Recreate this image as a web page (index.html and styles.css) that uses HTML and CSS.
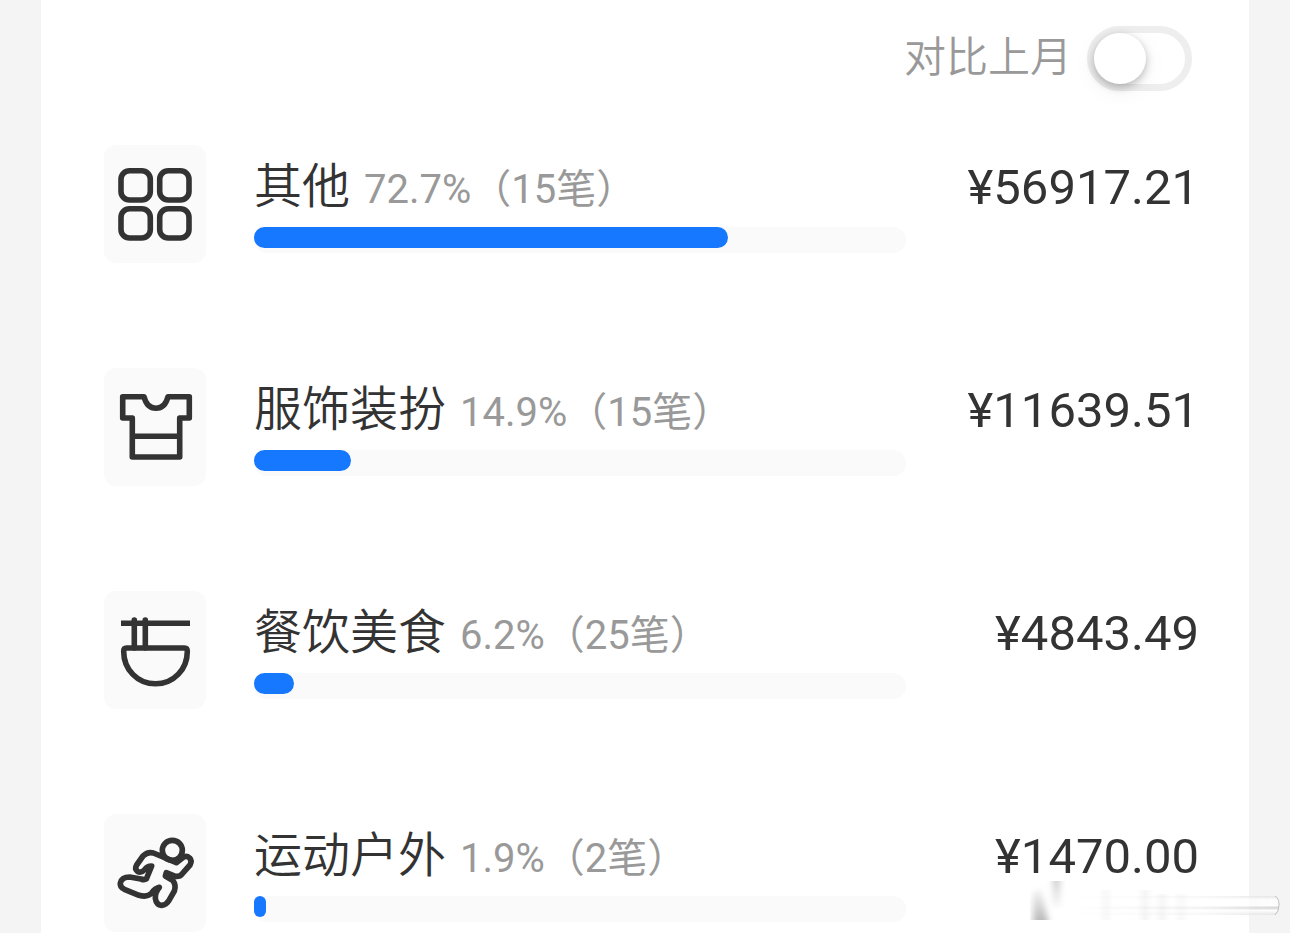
FILE: index.html
```html
<!DOCTYPE html>
<html lang="zh-CN">
<head>
    <meta charset="UTF-8">
    <meta name="viewport" content="width=device-width, initial-scale=1.0">
    <title>支出分类</title>
    <link rel="stylesheet" href="styles.css">
</head>
<body>
    <main class="card">
        <div class="compare">
            <label for="compare-switch">对比上月</label>
            <input id="compare-switch" class="switch" type="checkbox">
        </div>

        <ul class="list">
            <li class="item">
                <svg class="icon" viewBox="0 0 102 118" aria-hidden="true">
                    <rect x="17" y="25.7" width="29.3" height="29.3" rx="8.5"/>
                    <rect x="55.7" y="25.7" width="29.3" height="29.3" rx="8.5"/>
                    <rect x="17" y="63.7" width="29.3" height="29.3" rx="8.5"/>
                    <rect x="55.7" y="63.7" width="29.3" height="29.3" rx="8.5"/>
                </svg>
                <div class="info">
                    <div class="title">
                        <span class="name">其他</span>
                        <span class="detail">72.7%（15笔）</span>
                    </div>
                    <div class="track"><div class="fill" style="width: 72.7%"></div></div>
                </div>
                <div class="amount">¥56917.21</div>
            </li>

            <li class="item">
                <svg class="icon" viewBox="0 0 102 118" aria-hidden="true">
                    <path d="M40 28.7H18.7V50H28.3V89H75.7V50H85.3V28.7H64C62 37 57.5 40.3 52 40.3S42 37 40 28.7ZM28.3 68.3H75.7"/>
                </svg>
                <div class="info">
                    <div class="title">
                        <span class="name">服饰装扮</span>
                        <span class="detail">14.9%（15笔）</span>
                    </div>
                    <div class="track"><div class="fill" style="width: 14.9%"></div></div>
                </div>
                <div class="amount">¥11639.51</div>
            </li>

            <li class="item">
                <svg class="icon" viewBox="0 0 102 118" aria-hidden="true">
                    <path d="M17 32.2H86" stroke-linecap="butt"/>
                    <path d="M30.3 29V57M41.3 29V57" stroke-linecap="round"/>
                    <path d="M22.5 57H80.5Q83.3 57 83.3 60.4C83.3 78.4 69.5 92.8 51.5 92.8S19.7 78.4 19.7 60.4Q19.7 57 22.5 57Z"/>
                </svg>
                <div class="info">
                    <div class="title">
                        <span class="name">餐饮美食</span>
                        <span class="detail">6.2%（25笔）</span>
                    </div>
                    <div class="track"><div class="fill" style="width: 6.2%"></div></div>
                </div>
                <div class="amount">¥4843.49</div>
            </li>

            <li class="item">
                <svg class="icon" viewBox="27 17 306 354" aria-hidden="true">
                    <g stroke-width="17">
                        <circle cx="232" cy="126" r="30"/>
                        <path d="M202 145L175 134Q158 129 144 143L125 170Q118 182 127 189Q138 196 149 184Q156 173 170 173L154 212Q148 216 138 212L104 206Q80 206 76 224Q74 236 88 243L132 261Q158 268 170 254Q180 240 193 237Q180 252 181 270Q184 290 200 291Q214 290 222 276L238 248Q244 230 234 217L211 203L214 193L241 204Q254 206 262 196L285 170Q292 158 284 149Q274 140 263 148L244 163Z"/>
                    </g>
                </svg>
                <div class="info">
                    <div class="title">
                        <span class="name">运动户外</span>
                        <span class="detail">1.9%（2笔）</span>
                    </div>
                    <div class="track"><div class="fill" style="width: 1.9%"></div></div>
                </div>
                <div class="amount">¥1470.00</div>
            </li>
        </ul>
    </main>

    <svg class="smudge" viewBox="0 0 260 46" aria-hidden="true">
        <defs>
            <linearGradient id="streak" x1="0" y1="0" x2="0" y2="1">
                <stop offset="0" stop-color="#e2e2e2"/>
                <stop offset="0.2" stop-color="#fff"/>
                <stop offset="0.5" stop-color="#fff"/>
                <stop offset="0.62" stop-color="#d0d0d0"/>
                <stop offset="0.76" stop-color="#fff"/>
                <stop offset="1" stop-color="#e2e2e2"/>
            </linearGradient>
            <linearGradient id="fade">
                <stop offset="0" stop-color="#fff" stop-opacity="0"/>
                <stop offset="0.6" stop-color="#fff" stop-opacity="0.3"/>
                <stop offset="1" stop-color="#fff"/>
            </linearGradient>
            <linearGradient id="shade" x1="0" y1="0" x2="0" y2="1">
                <stop offset="0" stop-color="#bbb" stop-opacity="0"/>
                <stop offset="1" stop-color="#bbb"/>
            </linearGradient>
            <linearGradient id="shade-down" x1="0" y1="0" x2="0" y2="1">
                <stop offset="0" stop-color="#ccc"/>
                <stop offset="1" stop-color="#ccc" stop-opacity="0"/>
            </linearGradient>
            <mask id="fade-mask">
                <rect x="40" y="10" width="220" height="30" fill="url(#fade)"/>
            </mask>
            <filter id="soft" x="-50%" y="-20%" width="200%" height="140%">
                <feGaussianBlur stdDeviation="3 0"/>
            </filter>
        </defs>
        <g filter="url(#soft)">
            <path d="M3 40V14L10 4L18 40Z" fill="url(#shade)"/>
            <rect x="23" y="1" width="7" height="29" fill="url(#shade-down)"/>
            <path d="M74 10H78V40H74ZM112 10H118V40H112ZM129 14H135V40H129ZM149 14H153V40H149Z" fill="#f2f2f2"/>
        </g>
        <g mask="url(#fade-mask)">
            <path d="M45 16H245Q249 17 249 25T245 35H45Z" fill="url(#streak)"/>
            <path d="M245 16Q249 18 249 25T245 35" fill="none" stroke="#bbb" stroke-width="1"/>
        </g>
    </svg>
</body>
</html>
```

FILE: styles.css
```css
* {
    box-sizing: border-box;
}

body {
    margin: 0;
    padding: 0 41px;
    background-color: #f4f4f4;
    color: #333333;
    font-family: Roboto, 'Noto Sans CJK SC', sans-serif;
}

.card {
    min-height: 100vh;
    padding: 26px 50px 0 63px;
    background: #ffffff;
}

.compare {
    display: flex;
    justify-content: flex-end;
    align-items: center;
    gap: 15px;
    height: 65px;
    margin-right: 7px;
}

.compare label {
    color: #999999;
    font-family: 'Noto Sans CJK SC', sans-serif;
    font-size: 42px;
    font-weight: 350;
    line-height: 60px;
    padding-bottom: 9px;
}

.switch {
    appearance: none;
    width: 105px;
    height: 65px;
    margin: 0;
    border: 7px solid #eeeeee;
    border-radius: 33px;
    background: #ffffff;
    cursor: pointer;
}

.switch::before {
    content: '';
    display: block;
    width: 52px;
    height: 51px;
    border-radius: 50%;
    background: #ffffff;
    box-shadow: 0 3px 8px rgba(0, 0, 0, 0.26), 0 6px 24px rgba(0, 0, 0, 0.06);
}

.switch:checked {
    border-color: #1677ff;
    background: #1677ff;
}

.switch:checked::before {
    margin-left: auto;
}

.list {
    display: flex;
    flex-direction: column;
    gap: 105px;
    margin: 54px 0 0;
    padding: 0;
    list-style: none;
}

.item {
    display: grid;
    grid-template-columns: 102px 1fr 245px;
    column-gap: 48px;
    height: 118px;
}

.icon {
    width: 102px;
    height: 118px;
    border-radius: 12px;
    background: #fafafa;
    fill: none;
    stroke: #333333;
    stroke-width: 5.6;
    stroke-linejoin: round;
}

.title {
    display: flex;
    align-items: baseline;
    gap: 14px;
    height: 82px;
    line-height: 74px;
    white-space: nowrap;
}

.name {
    font-family: 'Noto Sans CJK SC', sans-serif;
    font-size: 48px;
    font-weight: 350;
}

.detail {
    color: #999999;
    font-size: 40px;
    font-weight: 400;
}

.track {
    height: 26px;
    border-radius: 13px;
    background: #fafafa;
}

.fill {
    height: 21px;
    border-radius: 11px;
    background: #1677ff;
}

.amount {
    font-size: 49px;
    line-height: 86px;
    text-align: right;
}

.smudge {
    position: absolute;
    right: 0;
    bottom: 7px;
    width: 260px;
    height: 46px;
}
```
